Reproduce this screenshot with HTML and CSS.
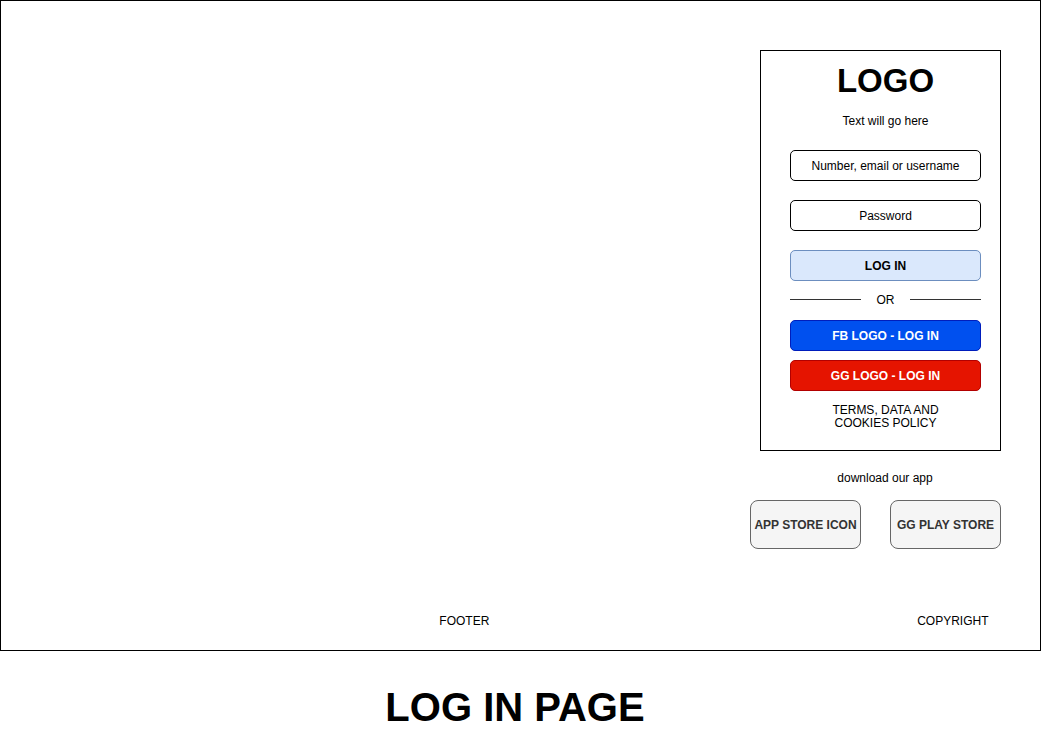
FILE: index.html
```html
<!DOCTYPE html>
<html>
<head>
<meta charset="utf-8">
<title>Log in page</title>
<link rel="stylesheet" href="styles.css">
</head>
<body>
<div class="frame">
  <main class="main">
    <section class="side">
      <div class="card">
        <div class="logo">LOGO</div>
        <div class="tagline">Text will go here</div>
        <div class="field field-first">Number, email or username</div>
        <div class="field">Password</div>
        <div class="btn btn-login">LOG IN</div>
        <div class="or-row"><span class="rule"></span><span class="or">OR</span><span class="rule"></span></div>
        <div class="btn btn-fb">FB LOGO - LOG IN</div>
        <div class="btn btn-gg">GG LOGO - LOG IN</div>
        <div class="terms">TERMS, DATA AND<br>COOKIES POLICY</div>
      </div>
      <div class="download">download our app</div>
      <div class="stores">
        <div class="store">APP STORE ICON</div>
        <div class="store">GG PLAY STORE</div>
      </div>
    </section>
  </main>
  <footer class="footer">
    <div class="foot-item foot-left">FOOTER</div>
    <div class="foot-item foot-right">COPYRIGHT</div>
  </footer>
</div>
<h1 class="title">LOG IN PAGE</h1>
</body>
</html>
```

FILE: styles.css
```css
* { box-sizing: border-box; }
html, body { margin: 0; padding: 0; background: #fff; }
body {
  font-family: "Liberation Sans", Arial, Helvetica, sans-serif;
  color: #000;
  font-size: 12px;
  width: 1041px;
}
.frame {
  width: 1041px;
  height: 651px;
  border: 1px solid #000;
  display: flex;
  flex-direction: column;
  padding: 49px 39px 19px 0;
}
.main {
  flex: 1;
  display: flex;
  justify-content: flex-end;
}
.side {
  width: 251px;
  display: flex;
  flex-direction: column;
}
.card {
  width: 241px;
  height: 401px;
  margin-left: 10px;
  border: 1px solid #000;
  display: flex;
  flex-direction: column;
  align-items: center;
  padding: 9px 19px 0 29px;
}
.logo {
  height: 40px;
  line-height: 41px;
  font-size: 33px;
  font-weight: bold;
}
.tagline {
  margin-top: 11px;
  height: 20px;
  line-height: 20px;
}
.field {
  width: 191px;
  height: 31px;
  border: 1px solid #000;
  border-radius: 5px;
  text-align: center;
  line-height: 31px;
  margin-top: 19px;
}
.btn {
  width: 191px;
  height: 31px;
  border: 1px solid;
  border-radius: 5px;
  text-align: center;
  line-height: 31px;
  font-weight: bold;
}
.btn-login {
  margin-top: 19px;
  background: #dae8fc;
  border-color: #6c8ebf;
}
.or-row {
  margin-top: 9px;
  width: 191px;
  height: 19px;
  display: flex;
  align-items: center;
  justify-content: space-between;
}
.rule {
  width: 71px;
  height: 1px;
  background: #333;
}
.or { line-height: 19px; padding-top: 2px; }
.btn-fb {
  margin-top: 11px;
  background: #0050ef;
  border-color: #001dbc;
  color: #fff;
}
.btn-gg {
  margin-top: 9px;
  background: #e51400;
  border-color: #b20000;
  color: #fff;
}
.terms {
  margin-top: 13px;
  line-height: 13px;
  text-align: center;
}
.download {
  margin-top: 17px;
  height: 20px;
  line-height: 20px;
  text-align: center;
  padding-left: 19px;
}
.stores {
  margin-top: 12px;
  display: flex;
  justify-content: space-between;
}
.store {
  width: 111px;
  height: 49px;
  background: #f5f5f5;
  border: 1px solid #666;
  border-radius: 8px;
  color: #333;
  font-weight: bold;
  display: flex;
  align-items: center;
  justify-content: center;
  white-space: nowrap;
}
.footer {
  height: 20px;
  display: flex;
  line-height: 20px;
}
.foot-item { text-align: center; }
.foot-left { width: 150px; margin-left: 391px; }
.foot-right { width: 100px; margin-left: 368px; }
.title {
  margin: 31px 0 0 0;
  width: 1030px;
  height: 50px;
  line-height: 50px;
  text-align: center;
  font-size: 40px;
  font-weight: bold;
}
```
